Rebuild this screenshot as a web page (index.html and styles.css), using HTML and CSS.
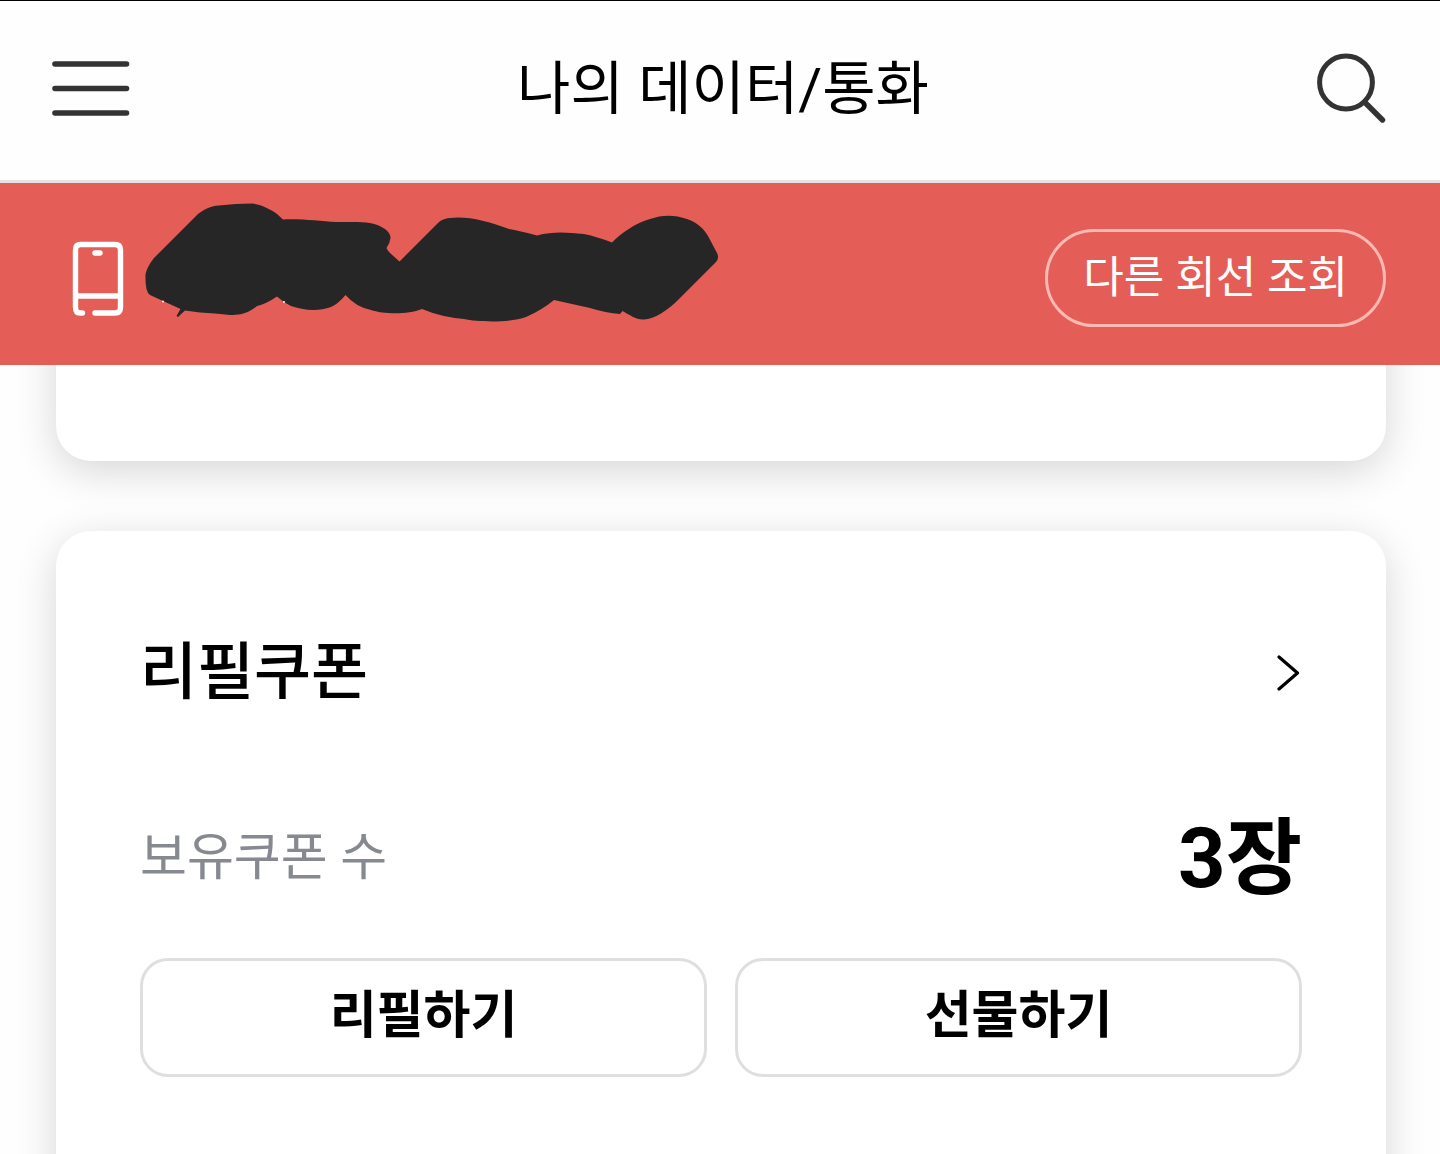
FILE: index.html
```html
<!DOCTYPE html>
<html lang="ko">
<head>
  <meta charset="UTF-8">
  <meta name="viewport" content="width=device-width, initial-scale=1.0">
  <title>나의 데이터/통화</title>
  <link rel="stylesheet" href="styles.css">
</head>
<body>

<div class="app">
  <header class="header">
    <button class="icon-button" aria-label="메뉴">
      <svg width="78" height="56" viewBox="0 0 78 56">
        <path d="M3 3H74.500M3 27.500H74.500M3 52H74.500" fill="none" stroke="#333" stroke-width="5.600" stroke-linecap="round"/>
      </svg>
    </button>
    <h1 class="title">나의 데이터/통화</h1>
    <button class="icon-button" aria-label="검색">
      <svg width="70" height="72" viewBox="0 0 70 72">
        <g fill="none" stroke="#333" stroke-linecap="round">
          <circle cx="30" cy="29.500" r="26.4" stroke-width="5"/>
          <path d="M49 49.500L66.500 67" stroke-width="5.4"/>
        </g>
      </svg>
    </button>
  </header>

  <div class="line-bar">
    <svg class="phone" width="52" height="75" viewBox="0 0 52 75">
      <g fill="none" stroke="#fff" stroke-width="5.4" stroke-linecap="round">
        <path d="M10.500 72H8Q3.500 72 3.500 66V9Q3.500 3.500 8.500 3.500H43Q48.500 3.500 48.500 9V66Q48.500 72 43 72H23"/>
        <path d="M4 55H48"/>
        <path d="M23 12H28"/>
      </g>
    </svg>
    <!-- the number is hidden -->
    <svg class="scribble" width="576" height="152" viewBox="144 202 576 152">
      <path fill="#262626" d="M145.500 275C146 270 150 263 154 258L196 216C202 210 210 206 219 205.500Q236 203.500 252 203.500C260 204 272 210 277 214L283 219.500C300 218.500 320 221 336 222C350 222 362 221.500 370 223C382 225 391 232 390.500 238Q390 243 386.500 248Q387 250 390 253L399.500 261.500L437 224C442 218.500 446 218 458 217.500C474 217.500 490 222 509 229Q519 230.500 537 235.500C554 231 567 232.500 584 234Q595 236 612 242.500C620 234 636 222.500 650 219C662 214.500 675 214.500 687 219C698 223 704 229 708 236L717 253Q719.500 258 716 262L678 300C668 310 654 319.500 644 319.500C636 320 630 315 622.500 311L620 314Q606 313 590 308L554 300Q542 310 526 317C510 323 478 322 464 319Q441 317 422 309C407 315 383 314 371 310Q356 307 345.500 295Q338 304 331 307C318 312 302 310 291 306Q284 303 277 296.500Q266 304 257 306C249 313 240 315.500 230 315Q215 313 200 312.500L185 310.500L178 317L176.500 316L180.500 309L150 295Q145 292 145.500 275Z"/>
      <circle cx="163" cy="301.500" r="1" fill="#fff"/>
      <circle cx="284" cy="302" r="1" fill="#fff"/>
    </svg>
    <button class="pill">다른 회선 조회</button>
  </div>

  <main class="content">
    <section class="card-prev"></section>

    <section class="card">
      <a class="card-head" href="#">
        <h2>리필쿠폰</h2>
        <svg width="25" height="38" viewBox="0 0 25 38">
          <path d="M2 3L20.500 19L2 35" fill="none" stroke="#000" stroke-width="3.200" stroke-linecap="round" stroke-linejoin="round"/>
        </svg>
      </a>
      <div class="count-row">
        <span class="count-label">보유쿠폰 수</span>
        <strong class="count">3장</strong>
      </div>
      <div class="actions">
        <button>리필하기</button>
        <button>선물하기</button>
      </div>
    </section>
  </main>
</div>

</body>
</html>
```
FILE: styles.css
```css
* {
  box-sizing: border-box;
}

body {
  margin: 0;
  background-color: #fefefe;
  color: #000;
  font-family: Roboto, 'Noto Sans CJK KR', sans-serif;
}

h1,
h2 {
  margin: 0;
}

button {
  font-family: inherit;
  color: inherit;
  background: none;
  padding: 0;
  cursor: pointer;
}

svg {
  display: block;
}

.app {
  display: flex;
  flex-direction: column;
  height: 100vh;
  overflow: hidden;
}

.header {
  display: flex;
  flex-shrink: 0;
  justify-content: space-between;
  align-items: center;
  height: 183px;
  padding: 0 54px 4px 52px;
  border-top: 1px solid #000;
  border-bottom: 3px solid #e4e2e2;
}

.icon-button {
  border: none;
}

.title {
  font-size: 58px;
  font-weight: 400;
  line-height: 80px;
}

.line-bar {
  display: flex;
  flex-shrink: 0;
  align-items: center;
  height: 182px;
  padding: 8px 54px 0 72px;
  background-color: #e45e57;
  color: #fff;
}

.scribble {
  margin-left: 20px;
}

.pill {
  margin-left: auto;
  height: 98px;
  padding: 0 35px;
  border: 3px solid #ffb9b5;
  border-radius: 49px;
  font-size: 44px;
  line-height: 60px;
}

.content {
  flex: 1;
  overflow: hidden;
  padding: 0 54px 0 56px;
}

.card,
.card-prev {
  border-radius: 35px;
  background-color: #fff;
  box-shadow: 0 10px 42px rgba(0, 0, 0, 0.16);
}

/* scrolled under the line bar */
.card-prev {
  height: 196px;
  margin-top: -100px;
  margin-bottom: 70px;
}

.card {
  padding: 100px 84px 180px;
}

.card-head {
  display: flex;
  justify-content: space-between;
  align-items: center;
  color: inherit;
  text-decoration: none;
}

.card-head h2 {
  font-size: 62px;
  font-weight: 500;
  line-height: 84px;
}

.count-row {
  display: flex;
  justify-content: space-between;
  align-items: center;
  height: 120px;
  margin-top: 84px;
}

.count-label {
  padding-bottom: 12px;
  font-size: 51px;
  color: #868a90;
}

.count {
  font-size: 83px;
  font-weight: 700;
  line-height: 120px;
}

.actions {
  display: flex;
  gap: 28px;
  margin-top: 39px;
}

.actions button {
  flex: 1;
  height: 119px;
  padding-bottom: 14px;
  border: 3px solid #dfdfdf;
  border-radius: 28px;
  font-size: 51px;
  font-weight: 700;
}
```
